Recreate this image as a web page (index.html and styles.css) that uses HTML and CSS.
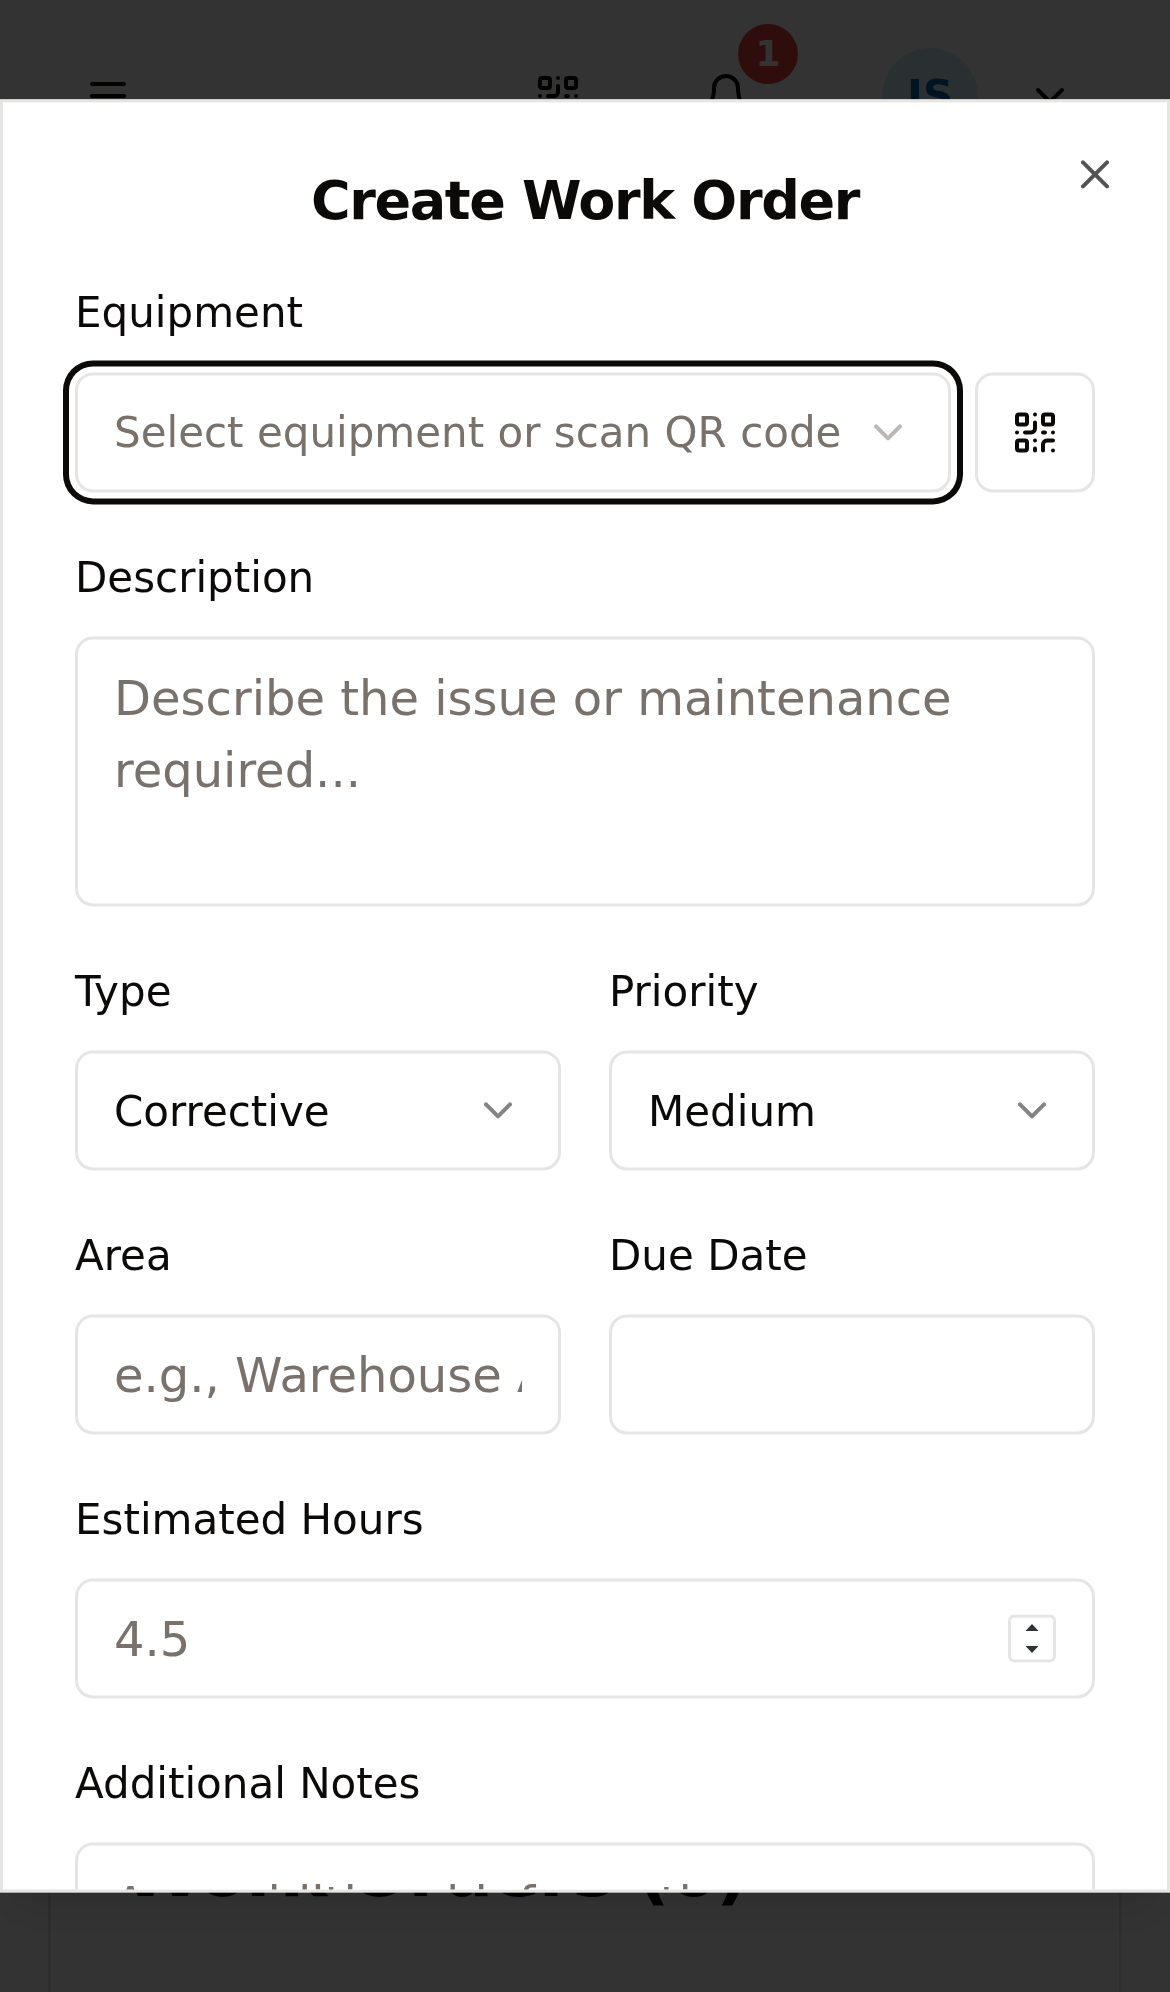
FILE: index.html
```html
<!DOCTYPE html>
<html lang="en">
<head>
<meta charset="utf-8">
<title>Create Work Order</title>
<link rel="stylesheet" href="styles.css">
</head>
<body>
<svg class="sprite" aria-hidden="true">
  <symbol id="qr" viewBox="0 0 24 24">
    <rect width="5" height="5" x="3" y="3" rx="1"/><rect width="5" height="5" x="16" y="3" rx="1"/><rect width="5" height="5" x="3" y="16" rx="1"/>
    <path d="M21 16h-3a2 2 0 0 0-2 2v3M21 21v.01M12 7v3a2 2 0 0 1-2 2H7M3 12h.01M12 3h.01M12 16v.01M16 12h1M21 12v.01M12 21v-1"/>
  </symbol>
  <symbol id="chevron" viewBox="0 0 24 24"><path d="m6 9 6 6 6-6"/></symbol>
</svg>

<div class="page">
  <header class="topbar">
    <svg class="icon" viewBox="0 0 24 24"><path d="M4 12h16M4 6h16M4 18h16"/></svg>
    <div class="actions">
      <svg class="icon"><use href="#qr"/></svg>
      <div class="bell">
        <svg class="icon" viewBox="0 0 24 24"><path d="M6 8a6 6 0 0 1 12 0c0 7 3 9 3 9H3s3-2 3-9M10.3 21a1.94 1.94 0 0 0 3.4 0"/></svg>
        <span class="count">1</span>
      </div>
      <div class="user">
        <span class="avatar">JS</span>
        <svg class="icon"><use href="#chevron"/></svg>
      </div>
    </div>
  </header>
  <main class="content">
    <section class="card"><h2 class="card-title">Work Orders (6)</h2></section>
  </main>
</div>

<div class="overlay">
  <div class="dialog" role="dialog" aria-labelledby="dialog-title">
    <h1 class="title" id="dialog-title">Create Work Order</h1>
    <button class="close" aria-label="Close"><svg class="icon" viewBox="0 0 24 24"><path d="M18 6 6 18M6 6l12 12"/></svg></button>
    <form class="form">
      <div class="field">
        <div class="label-row first"><label>Equipment</label></div>
        <div class="picker">
          <div class="control select focused"><span>Select equipment or scan QR code</span><svg class="icon"><use href="#chevron"/></svg></div>
          <div class="control scan"><svg class="icon"><use href="#qr"/></svg></div>
        </div>
      </div>
      <div class="field">
        <div class="label-row"><label>Description</label></div>
        <textarea class="control area" rows="3" placeholder="Describe the issue or maintenance required..."></textarea>
      </div>
      <div class="pair">
        <div class="field">
          <div class="label-row"><label>Type</label></div>
          <div class="control select"><span>Corrective</span><svg class="icon"><use href="#chevron"/></svg></div>
        </div>
        <div class="field">
          <div class="label-row"><label>Priority</label></div>
          <div class="control select"><span>Medium</span><svg class="icon"><use href="#chevron"/></svg></div>
        </div>
      </div>
      <div class="pair">
        <div class="field">
          <div class="label-row"><label>Area</label></div>
          <input class="control" type="text" placeholder="e.g., Warehouse A">
        </div>
        <div class="field">
          <div class="label-row"><label>Due Date</label></div>
          <input class="control" type="text">
        </div>
      </div>
      <div class="field">
        <div class="label-row"><label>Estimated Hours</label></div>
        <div class="control number">
          <input class="bare" type="text" placeholder="4.5">
          <svg class="spinner" viewBox="0 0 48 48"><rect x="1.5" y="1.5" width="45" height="45" rx="5"/><path d="m24 9.500 6.500 7h-13zM24 38.500l6.500-7h-13z"/></svg>
        </div>
      </div>
      <div class="field">
        <div class="label-row"><label>Additional Notes</label></div>
        <textarea class="control area" rows="3" placeholder="Any additional information..."></textarea>
      </div>
    </form>
  </div>
</div>
</body>
</html>
```
FILE: styles.css
```css
* { box-sizing: border-box; }

body {
  margin: 0;
  height: 1992px;
  overflow: hidden;
  background: #fff;
  color: #0c0a09;
  font: 48px/72px "DejaVu Sans", sans-serif;
}

h1, h2 { margin: 0; }

button, input, textarea { font: inherit; color: inherit; }

.sprite { position: absolute; width: 0; height: 0; }

.icon {
  display: block;
  flex: none;
  width: 48px;
  height: 48px;
  fill: none;
  stroke: currentColor;
  stroke-width: 2;
  stroke-linecap: round;
  stroke-linejoin: round;
}

/* Page behind the dialog */
.page {
  display: flex;
  flex-direction: column;
  height: 1992px;
}

.topbar {
  display: flex;
  flex: none;
  align-items: center;
  justify-content: space-between;
  height: 192px;
  padding: 0 96px 0 84px;
}

.actions { display: flex; align-items: center; gap: 120px; }

.bell { position: relative; }

.count {
  position: absolute;
  top: -48px;
  left: 36px;
  width: 60px;
  height: 60px;
  border-radius: 50%;
  background: #ef4444;
  color: #fff;
  font-size: 36px;
  font-weight: 700;
  line-height: 60px;
  text-align: center;
}

.user { display: flex; align-items: center; gap: 48px; margin-left: 12px; }

.avatar {
  width: 96px;
  height: 96px;
  border-radius: 50%;
  background: #d3edf8;
  color: #0066ac;
  font-size: 42px;
  font-weight: 700;
  line-height: 96px;
  text-align: center;
}

.content {
  display: flex;
  flex: 1;
  flex-direction: column;
  justify-content: flex-end;
  padding: 0 48px;
}

.card {
  height: 198px;
  padding: 41px 72px 0;
  border: 3px solid #e7e5e4;
  border-width: 0 3px;
}

.card-title {
  font-size: 72px;
  line-height: 72px;
  letter-spacing: -1.8px;
  white-space: nowrap;
}

/* Dialog */
.overlay {
  position: fixed;
  inset: 0;
  background: rgb(0 0 0 / 0.8);
}

.dialog {
  position: relative;
  width: 1170px;
  height: 1793px;
  padding: 72px;
  overflow: hidden;
  transform: translateY(99.4px);
  border: 3px solid #e7e5e4;
  background: #fff;
  box-shadow: 0 30px 45px -9px rgb(0 0 0 / 0.1), 0 12px 18px -12px rgb(0 0 0 / 0.1);
}

.title {
  margin-bottom: 48px;
  font-size: 54px;
  line-height: 54px;
  letter-spacing: -1.35px;
  text-align: center;
}

.close {
  position: absolute;
  top: 48px;
  right: 48px;
  padding: 0;
  border: 0;
  background: none;
  opacity: 0.7;
}

.form { display: grid; gap: 48px; }

.field { display: grid; gap: 24px; min-width: 0; }

.label-row { height: 72px; line-height: 70px; }

.label-row.first { line-height: 68px; }

.label-row label { font-size: 42px; line-height: 42px; }

.pair { display: grid; grid-template-columns: 1fr 1fr; gap: 48px; }

.picker { display: grid; grid-template-columns: 1fr 120px; gap: 24px; }

.control {
  display: block;
  width: 100%;
  height: 120px;
  padding: 24px 36px;
  border: 3px solid #e7e5e4;
  border-radius: 18px;
  outline: 0;
  background: #fff;
}

input.control { padding: 25px 36px 23px; }

.control::placeholder, .bare::placeholder { color: #78716c; opacity: 1; }

.area { height: 270px; padding-top: 23px; resize: none; overflow: hidden; }

.select {
  display: flex;
  align-items: center;
  justify-content: space-between;
  font-size: 42px;
  line-height: 60px;
  white-space: nowrap;
}

.select span { padding-top: 4px; }

.select.focused span { padding-top: 2px; }

.select .icon { opacity: 0.5; }

.focused {
  color: #78716c;
  box-shadow: 0 0 0 6px #fff, 0 0 0 12px #0c0a09;
}

.scan { display: flex; align-items: center; justify-content: center; padding: 0; }

.number { display: flex; align-items: center; }

.bare {
  flex: 1;
  min-width: 0;
  height: 74px;
  padding: 2px 0 0;
  border: 0;
  outline: 0;
  background: none;
}

.spinner { flex: none; width: 48px; height: 48px; fill: #2e3436; }

.spinner rect { fill: #fff; stroke: #e5e5e5; stroke-width: 3; }
```
